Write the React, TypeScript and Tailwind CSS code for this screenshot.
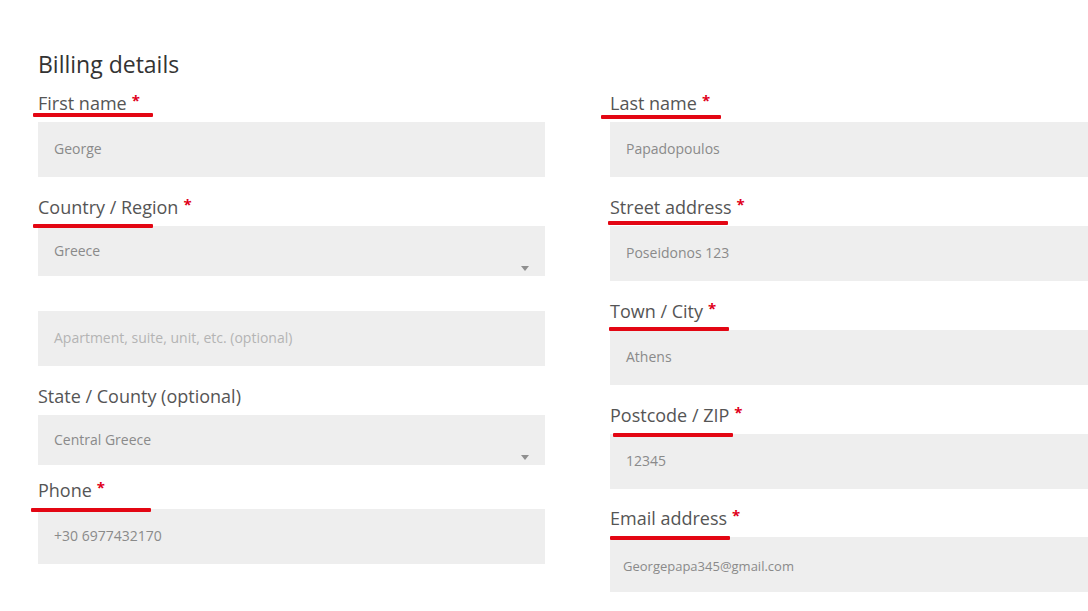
import React from 'react';

type Mark = { x: number; y: number };

interface FieldProps {
  label: string;
  value?: string;
  placeholder?: string;
  required?: boolean;
  select?: boolean;
  mark?: Mark;
  className?: string;
  small?: boolean;
}

function Field({ label, value, placeholder, required, select, mark, className, small }: FieldProps) {
  return (
    <div className={`relative ${className ?? ''}`}>
      <label className="block h-[22px] text-[18px] leading-[22px] text-[#555555]">
        {label}
        {required && (
          <span className="ml-[5px] align-top text-[15px] font-bold leading-[16px] text-[#e0001b]">*</span>
        )}
      </label>
      {select ? (
        <div className="relative mt-2 flex h-[50px] items-center bg-[#eeeeee] px-4 pb-px text-[14px] text-[#8a8a8a]">
          {value}
          <svg className="absolute bottom-[5px] right-[16px]" width="8" height="5" viewBox="0 0 8 5">
            <path d="M0 0h8L4 5z" fill="#8f8f8f" />
          </svg>
        </div>
      ) : (
        <Input value={value} placeholder={placeholder} small={small} />
      )}
      {mark && (
        <div
          className="absolute h-[4px] w-[120px] rounded-[1px] bg-[#e30613]"
          style={{ left: mark.x, top: mark.y }}
        />
      )}
    </div>
  );
}

function Input({ value, placeholder, small, className }: { value?: string; placeholder?: string; small?: boolean; className?: string }) {
  return (
    <div
      className={`mt-2 flex h-[55px] items-center bg-[#eeeeee] pr-4 ${small ? 'pl-[13px] pt-[5px] text-[13px]' : 'pl-4 pb-[2px] text-[14px]'} ${
        value ? 'text-[#8a8a8a]' : 'text-[#b4b4b4]'
      } ${className ?? ''}`}
    >
      {value ?? placeholder}
    </div>
  );
}

export default function App() {
  return (
    <div className="h-[611px] w-[1088px] overflow-hidden bg-white pl-[38px] pt-[50px] font-['Open_Sans',sans-serif]">
      <h3 className="text-[23px] leading-[28px] text-[#333333]">Billing details</h3>
      <div className="mt-[14px] flex w-[1079px] gap-[65px]">
        <div className="w-[507px] shrink-0">
          <Field label="First name" value="George" required mark={{ x: -5, y: 21 }} />
          <Field className="mt-[19px]" label="Country / Region" value="Greece" required select mark={{ x: -5, y: 28 }} />
          <Input className="mt-[35px]" placeholder="Apartment, suite, unit, etc. (optional)" />
          <Field className="mt-[19px]" label="State / County (optional)" value="Central Greece" select />
          <Field className="mt-[14px]" label="Phone" value="+30 6977432170" required mark={{ x: -7, y: 29 }} />
        </div>
        <div className="w-[507px] shrink-0">
          <Field label="Last name" value="Papadopoulos" required mark={{ x: -9, y: 23 }} />
          <Field className="mt-[19px]" label="Street address" value="Poseidonos 123" required mark={{ x: -2, y: 25 }} />
          <Field className="mt-[19px]" label="Town / City" value="Athens" required mark={{ x: -1, y: 27 }} />
          <Field className="mt-[19px]" label="Postcode / ZIP" value="12345" required mark={{ x: 3, y: 29 }} />
          <Field className="mt-[18px]" label="Email address" value="Georgepapa345@gmail.com" required small mark={{ x: 0, y: 29 }} />
        </div>
      </div>
    </div>
  );
}
